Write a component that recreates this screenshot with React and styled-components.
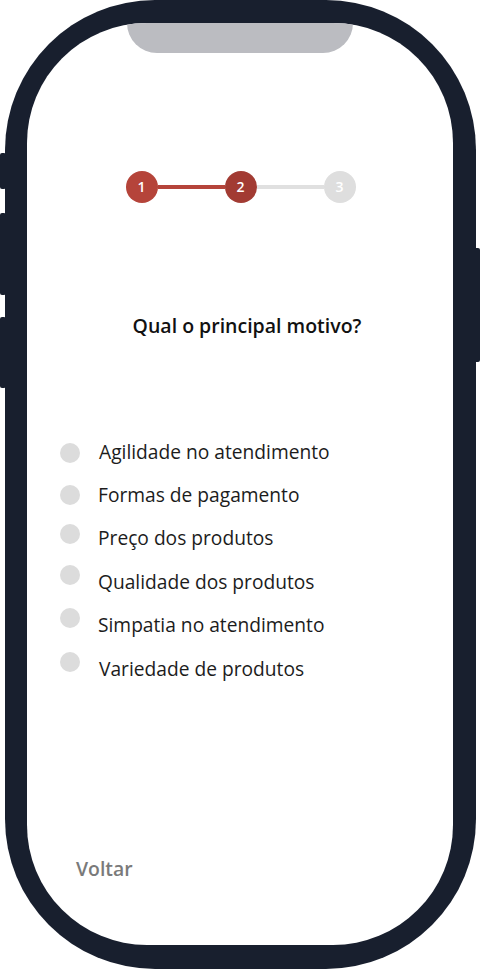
import React from "react";
import styled, { createGlobalStyle } from "styled-components";

const Global = createGlobalStyle`
  html, body { margin: 0; padding: 0; background: #ffffff; }
  body { font-family: "Open Sans", "Liberation Sans", sans-serif; }
  * { box-sizing: border-box; }
`;

const Page = styled.div`
  width: 480px;
  height: 969px;
  padding-left: 5px;
  position: relative;
  overflow: hidden;
`;

const Frame = styled.div`
  position: relative;
  width: 471px;
  height: 969px;
  background: #181f2e;
  border-radius: 150px;
  padding: 23px 23px 24px 22px;
`;

const SideButton = styled.div`
  position: absolute;
  width: 6px;
  background: #181f2e;
  border-radius: 2px;
  top: ${(p) => p.$top}px;
  height: ${(p) => p.$h}px;
  ${(p) => (p.$right ? "right: -4px;" : "left: -5px;")}
`;

const Screen = styled.div`
  width: 100%;
  height: 100%;
  background: #ffffff;
  border-radius: 120px;
  display: flex;
  flex-direction: column;
  align-items: center;
  overflow: hidden;
`;

const Notch = styled.div`
  width: 226px;
  height: 30px;
  background: #bbbcc1;
  border-radius: 0 0 30px 30px;
  flex-shrink: 0;
`;

const Stepper = styled.div`
  margin-top: 118px;
  display: flex;
  align-items: center;
  margin-left: 1px;
`;

const Step = styled.div`
  width: 32px;
  height: 32px;
  border-radius: 50%;
  background: ${(p) => p.$bg};
  color: #ffffff;
  font-size: 14px;
  font-weight: 600;
  display: flex;
  align-items: center;
  justify-content: center;
  line-height: 1;
`;

const Line = styled.div`
  width: 67px;
  height: 4px;
  background: ${(p) => p.$bg};
`;

const Title = styled.h2`
  margin: 111px 0 0 14px;
  font-size: 19.5px;
  font-weight: 600;
  color: #111111;
  line-height: 24px;
`;

const Options = styled.ul`
  list-style: none;
  margin: 92px 0 0 0;
  padding: 0 0 0 33px;
  align-self: stretch;
  display: flex;
  flex-direction: column;
`;

const Option = styled.li`
  height: 43.4px;
  display: flex;
  align-items: center;
  gap: 18px;
`;

const Radio = styled.span`
  width: 20px;
  height: 20px;
  border-radius: 50%;
  background: #dcdcdc;
  flex-shrink: 0;
  transform: translateY(${(p) => p.$dy}px);
`;

const Label = styled.span`
  font-size: 19.2px;
  color: #1c1c1c;
  line-height: 24px;
  margin-left: ${(p) => p.$ml}px;
`;

const Footer = styled.div`
  margin-top: auto;
  margin-bottom: 64px;
  align-self: stretch;
  padding-left: 49px;
`;

const BackButton = styled.button`
  background: none;
  border: none;
  padding: 0;
  font-family: "Open Sans", "Liberation Sans", sans-serif;
  font-size: 19.4px;
  font-weight: 600;
  color: #7a7a7a;
  line-height: 24px;
  cursor: pointer;
`;

const options = [
  { text: "Agilidade no atendimento", dy: 1, ml: 1 },
  { text: "Formas de pagamento", dy: 0, ml: 0 },
  { text: "Preço dos produtos", dy: -4, ml: 0 },
  { text: "Qualidade dos produtos", dy: -7, ml: 0 },
  { text: "Simpatia no atendimento", dy: -7, ml: 0 },
  { text: "Variedade de produtos", dy: -7, ml: 1 },
];

export default function App() {
  return (
    <>
      <Global />
      <Page>
        <Frame>
          <SideButton $top={153} $h={36} />
          <SideButton $top={213} $h={82} />
          <SideButton $top={317} $h={71} />
          <SideButton $right $top={248} $h={114} />
          <Screen>
            <Notch />
            <Stepper>
              <Step $bg="#b5443a">1</Step>
              <Line $bg="#b5443a" />
              <Step $bg="#a23b33">2</Step>
              <Line $bg="#e0e0e0" />
              <Step $bg="#dedede">3</Step>
            </Stepper>
            <Title>Qual o principal motivo?</Title>
            <Options>
              {options.map((o) => (
                <Option key={o.text}>
                  <Radio $dy={o.dy} />
                  <Label $ml={o.ml}>{o.text}</Label>
                </Option>
              ))}
            </Options>
            <Footer>
              <BackButton>Voltar</BackButton>
            </Footer>
          </Screen>
        </Frame>
      </Page>
    </>
  );
}
